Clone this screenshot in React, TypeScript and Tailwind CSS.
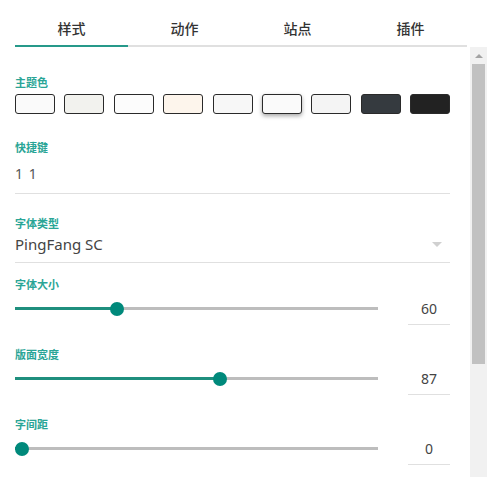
import React from "react";

const font = { fontFamily: '"Noto Sans", "Noto Sans CJK SC", sans-serif' };

const swatches = [
  { c: "bg-[#fafafa]" },
  { c: "bg-[#f2f2ee]" },
  { c: "bg-[#fcfcfc]" },
  { c: "bg-[#fdf5ec]" },
  { c: "bg-[#f7f7f7]" },
  { c: "bg-[#fafafa]", sel: true },
  { c: "bg-[#f4f4f4]" },
  { c: "bg-[#353a3f]" },
  { c: "bg-[#222222]" },
];

function Label({ children }: { children: React.ReactNode }) {
  return (
    <div className="h-[15px] text-[11px] leading-[15px] font-bold text-[#2aa596]">
      {children}
    </div>
  );
}

function SliderRow({ frac, value }: { frac: number; value: string }) {
  return (
    <div className="flex items-center">
      <div className="relative flex-1 h-[14px]">
        <div className="absolute left-0 right-0 top-[5px] h-[3px] bg-[#bdbdbd]" />
        <div
          className="absolute left-0 top-[5px] h-[3px] bg-[#1f8f7e]"
          style={{ width: `calc(7px + (100% - 14px) * ${frac})` }}
        />
        <div
          className="absolute top-0 w-[14px] h-[14px] rounded-full bg-[#00897b]"
          style={{ left: `calc((100% - 14px) * ${frac})` }}
        />
      </div>
      <div className="ml-[30px] w-[42px] h-[33px] border-b border-[#e0e0e0] flex items-center justify-center text-[14px] text-[#444]">
        {value}
      </div>
    </div>
  );
}

export default function App() {
  return (
    <div className="w-[489px] h-[477px] bg-white overflow-hidden flex flex-col" style={font}>
      <div className="px-[15px] w-[482px]">
        <div className="flex">
          {["样式", "动作", "站点", "插件"].map((t, i) => (
            <div key={t} className="flex-1 flex flex-col">
              <div className="h-[45px] pt-[12px] flex items-center justify-center text-[14px] font-medium text-[#333]">
                {t}
              </div>
              <div className={i === 0 ? "h-[2px] bg-[#26998a]" : "h-[2px] bg-[#e0e0e0]"} />
            </div>
          ))}
        </div>
      </div>
      <div className="flex flex-1 min-h-0">
        <div className="flex-1 pl-[15px] pr-[20px] pt-[28px] flex flex-col">
          <Label>主题色</Label>
          <div className="mt-[4px] flex justify-between">
            {swatches.map((s, i) => (
              <div
                key={i}
                className={`w-[40px] h-[20px] rounded-[3px] border border-[#2a2a2a] ${s.c} ${
                  s.sel ? "shadow-[0_2px_4px_rgba(0,0,0,0.35)]" : ""
                }`}
              />
            ))}
          </div>
          <div className="mt-[26px]">
            <Label>快捷键</Label>
          </div>
          <div className="mt-[9px] pb-[9px] border-b border-[#e0e0e0] text-[14px] leading-[20px] text-[#555] tracking-[1px]">
            1 1
          </div>
          <div className="mt-[22px]">
            <Label>字体类型</Label>
          </div>
          <div className="mt-[3px] pb-[8px] border-b border-[#e0e0e0] flex items-center justify-between">
            <span className="text-[15px] leading-[20px] text-[#444]">PingFang SC</span>
            <div className="mr-[8px] w-0 h-0 border-l-[5px] border-r-[5px] border-t-[5px] border-l-transparent border-r-transparent border-t-[#d0d0d0]" />
          </div>
          <div className="mt-[14px]">
            <Label>字体大小</Label>
          </div>
          <SliderRow frac={0.272} value="60" />
          <div className="mt-[22px]">
            <Label>版面宽度</Label>
          </div>
          <SliderRow frac={0.567} value="87" />
          <div className="mt-[22px]">
            <Label>字间距</Label>
          </div>
          <SliderRow frac={0} value="0" />
        </div>
        <div className="w-[17px] mr-[2px] bg-[#f1f1f1] flex flex-col items-center">
          <div className="h-[17px] flex items-center justify-center">
            <div className="w-0 h-0 border-l-[4px] border-r-[4px] border-b-[4px] border-l-transparent border-r-transparent border-b-[#a3a3a3]" />
          </div>
          <div className="w-[13px] h-[300px] bg-[#c1c1c1]" />
        </div>
      </div>
    </div>
  );
}
